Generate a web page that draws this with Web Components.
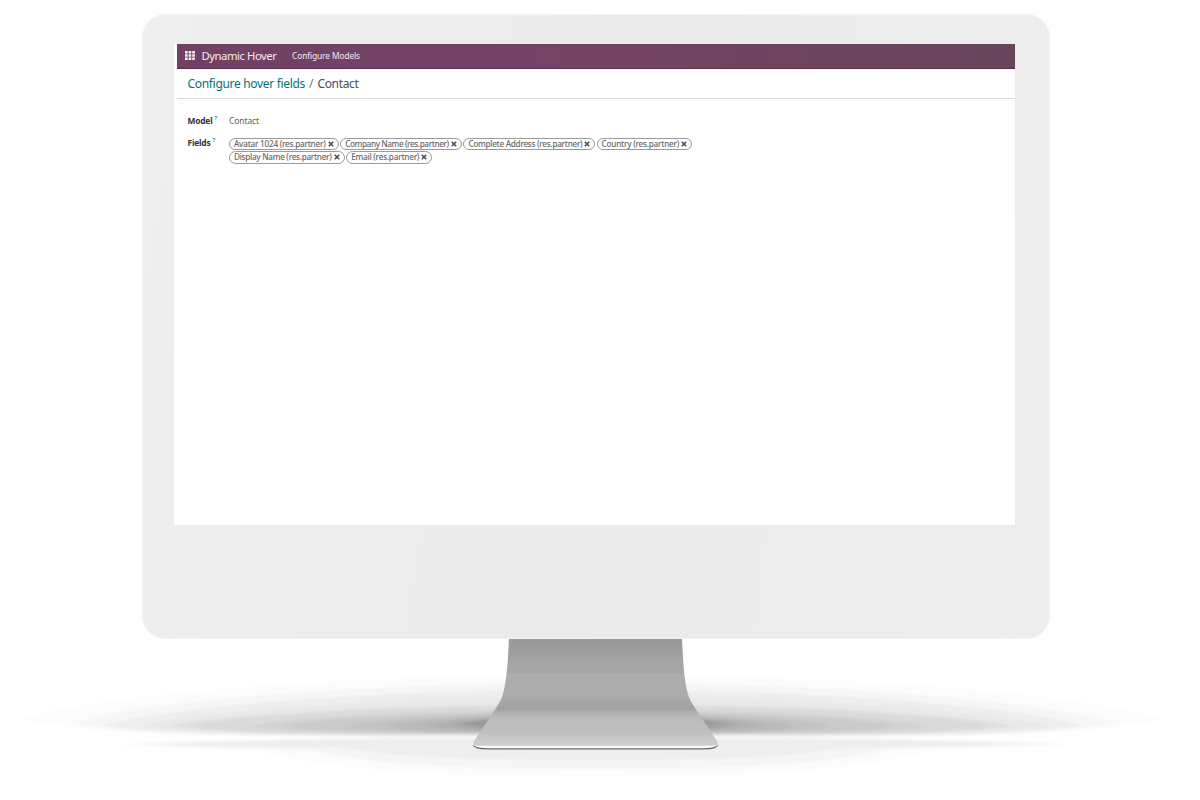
<!DOCTYPE html>
<html lang="en"><head><meta charset="utf-8"><title>Dynamic Hover</title>
<style>html,body{margin:0;background:#fff;overflow:hidden}body{width:1200px;height:800px;font-family:"Noto Sans","Open Sans",sans-serif}</style></head>
<body>
<desktop-monitor>
  <app-navbar></app-navbar>
  <bread-crumb></bread-crumb>
  <record-form></record-form>
</desktop-monitor>
<script>
const define=(name,html,ready)=>customElements.define(name,class extends HTMLElement{
  connectedCallback(){
    if(this.shadowRoot)return;
    const t=document.createElement('template');t.innerHTML=html;
    this.attachShadow({mode:'open'}).append(t.content.cloneNode(true));
    if(ready)ready(this);
  }
});
// A label that tracks its letters to fill the width given in "w".
define('fit-label','<style>:host{display:inline-block;white-space:nowrap;flex:none}span{display:inline-block}</style><span><slot></slot></span>',el=>{
  const w=+el.getAttribute('w'),s=el.shadowRoot.querySelector('span');
  el.style.width=w+'px';
  const n=el.textContent.length;
  s.style.letterSpacing=((w-s.getBoundingClientRect().width)/n)+'px';
});
define('floor-shadow',`<style>:host{display:block;width:1200px;height:140px}svg{display:block}</style>
<svg width="1200" height="140" viewBox="0 660 1200 140"><defs><filter id="b" x="-5%" y="-5%" width="110%" height="110%"><feGaussianBlur stdDeviation="4 .8"/></filter></defs><g id="g" filter="url(#b)"></g></svg>`,el=>{
  const upper=[[20,1162,719,675,738,'#fcfcfc'],[74,1113,723,683,737,'#f6f6f6'],[104,1083,726,690,736,'#eee'],[140,1050,726,697,735.5,'#e9e9e9'],[168,1014,726,704,735,'#e0e0e0'],[190,992,726,706,734.5,'#dadada'],[250,930,726,710,734,'#d2d2d2'],[280,895,726,712,733.5,'#cbcbcb'],[345,835,726,713,733,'#c3c3c3'],[385,795,726,714,732.5,'#bababa'],[425,763,725,715,732,'#b1b1b1'],[452,735,724,715.5,731,'#a4a4a4'],[466,719,723,716,729,'#999']];
  let h='<path fill="#fcfcfc" d="M100 744Q200 739 400 737H800Q980 739 1090 744Q1000 749 930 751C860 770 760 776 595 777C430 776 330 770 270 753Q210 750 100 744Z"/><path fill="#f5f5f5" d="M136 744Q230 740 400 737H800Q980 740 1054 744Q960 747 890 749C830 764 740 769 595 769C450 769 370 764 310 750Q200 748 136 744Z"/><path fill="#eee" d="M160 744Q280 739.500 440 739H750Q910 740 1027 744Q920 747 840 748C790 757 720 760 595 760C470 760 400 757 340 747Q230 747 160 744Z"/>';
  for(const [l,r,y,t,b,c] of upper)h+='<path fill="'+c+'" d="M'+l+' '+y+'C'+(l+(595-l)*.12)+' '+(y-(y-t)*.5)+' '+(l+(595-l)*.5)+' '+t+' 595 '+t+'S'+(r-(r-595)*.12)+' '+(y-(y-t)*.5)+' '+r+' '+y+'C'+(r-(r-595)*.15)+' '+b+' '+(r-(r-595)*.35)+' '+b+' 595 '+b+'S'+(l+(595-l)*.15)+' '+b+' '+l+' '+y+'Z"/>';
  el.shadowRoot.querySelector('#g').innerHTML=h;
});
define('monitor-stand',`<style>:host{display:block;width:250px;height:114px}svg{display:block}</style>
<svg width="250" height="114" viewBox="470 638 250 114"><defs><linearGradient id="s" gradientUnits="userSpaceOnUse" x1="0" y1="638" x2="0" y2="746">
<stop offset="0" stop-color="#999"/><stop offset=".15" stop-color="#9e9e9e"/><stop offset=".19" stop-color="#a4a4a4"/><stop offset=".32" stop-color="#a6a6a6"/><stop offset=".34" stop-color="#adadad"/><stop offset=".55" stop-color="#acacac"/><stop offset=".6" stop-color="#a4a4a4"/><stop offset=".66" stop-color="#a3a3a3"/><stop offset=".7" stop-color="#b4b4b4"/><stop offset=".75" stop-color="#bcbcbc"/><stop offset=".88" stop-color="#c0c0c0"/><stop offset=".93" stop-color="#c8c8c8"/><stop offset="1" stop-color="#d0d0d0"/></linearGradient></defs>
<path d="M473 745Q474 749.500 488 749.500H703Q717 749.500 718 745L714 742H478Z" fill="#686868"/>
<path d="M473 744Q475 748.300 488 748.300H703Q716 748.300 718 744L714 741H478Z" fill="#fafafa"/>
<path d="M509 638H682C683 660 684 680 688 694C689 699 692 703 695 708L717 741Q719 745 714 745.700H477Q472 745 474 741L496 708C499 703 502 699 503 694C507 679 508 660 509 638Z" fill="url(#s)"/></svg>`);
define('desktop-monitor',`<style>
:host{display:grid;width:1200px;height:800px;grid-template:14px 625px 161px / 142px 908px 150px}
.case{grid-area:2/2;box-sizing:border-box;border-radius:24px;padding:30px 35px 0 32px;background:linear-gradient(100deg,#eee,#ebebeb 50%,#ededed);box-shadow:inset 0 0 0 1px #f3f3f3;z-index:1}
.screen{height:481px;background:#fff;box-sizing:border-box;padding-left:3px;display:flex;flex-direction:column}
floor-shadow{grid-area:3/1/4/4;align-self:end}
monitor-stand{grid-area:3/2;margin:-1px 0 0 328px;z-index:1}
</style><floor-shadow></floor-shadow><monitor-stand></monitor-stand><div class="case"><div class="screen"><slot></slot></div></div>`);
define('app-navbar',`<style>:host{display:flex;align-items:center;box-sizing:border-box;height:25px;flex:none;padding:0 0 2px 7.500px;color:#f3eaf0;background:linear-gradient(90deg,#714062,#754365 45%,#68455a);border-bottom:1px solid #5b2f50}
svg{margin-right:7px;position:relative;top:.5px}.app{font-size:11.300px;margin-right:15.500px}.menu{font-size:8.400px}</style>
<svg width="10" height="9" viewBox="0 0 10 9" fill="#f3edf1"><path d="M0 0h2.700v2.400H0zM3.600 0h2.700v2.400H3.600zM7.200 0h2.700v2.400H7.200zM0 3.300h2.700v2.400H0zM3.600 3.300h2.700v2.400H3.600zM7.200 3.300h2.700v2.400H7.200zM0 6.600h2.700V9H0zM3.600 6.600h2.700V9H3.600zM7.200 6.600h2.700V9H7.200z"/></svg>
<fit-label class="app" w="75">Dynamic Hover</fit-label><fit-label class="menu" w="68">Configure Models</fit-label>`);
define('bread-crumb',`<style>:host{display:flex;align-items:center;box-sizing:border-box;height:30px;flex:none;padding:.5px 0 0 10.500px;border-bottom:1px solid #d5d8df;font-size:12px;color:#4a4f59}
.link{color:#017278}.sep{margin:0 4px;color:#6c757d}</style>
<fit-label class="link" w="117.500">Configure hover fields</fit-label><span class="sep">/</span><fit-label w="41">Contact</fit-label>`);
define('field-label',`<style>:host{display:flex;align-items:flex-start;font-size:8.400px;line-height:12px;font-weight:700;color:#333}sup{font-size:5.500px;line-height:7px;color:#2196a8;margin-left:2px}</style><slot></slot><sup>?</sup>`);
define('tag-pill',`<style>:host{display:flex;align-items:center;box-sizing:border-box;height:12.500px;border:1px solid #9a9a9a;border-radius:7px;padding:0 4px;font-size:8.200px;line-height:10px;color:#686868;font-weight:500}
svg{margin-left:auto}</style><slot></slot><svg width="6" height="6" viewBox="0 0 6 6"><path d="M.8.8l4.400 4.400M5.200.8L.8 5.200" stroke="#4c4c4c" stroke-width="1.600"/></svg>`,el=>{el.style.width=el.getAttribute('width')+'px'});
define('record-form',`<style>:host{display:grid;grid-template-columns:41.500px 464px;grid-template-rows:22px auto;padding:15.500px 0 0 10.500px}
.value{font-size:8.400px;line-height:12px;color:#5c5c5c;margin-top:.5px}
.tags{display:flex;flex-wrap:wrap;gap:1.200px 1.700px;margin-top:1px}</style>
<field-label><fit-label w="25">Model</fit-label></field-label><fit-label class="value" w="30">Contact</fit-label>
<field-label><fit-label w="23">Fields</fit-label></field-label>
<div class="tags">
<tag-pill width="109.500"><fit-label w="91.500">Avatar 1024 (res.partner)</fit-label></tag-pill>
<tag-pill width="121.500"><fit-label w="103.500">Company Name (res.partner)</fit-label></tag-pill>
<tag-pill width="131.500"><fit-label w="114">Complete Address (res.partner)</fit-label></tag-pill>
<tag-pill width="95.500"><fit-label w="77.500">Country (res.partner)</fit-label></tag-pill>
<tag-pill width="115.500"><fit-label w="97.500">Display Name (res.partner)</fit-label></tag-pill>
<tag-pill width="86"><fit-label w="68">Email (res.partner)</fit-label></tag-pill>
</div>`);
</script></body></html>
